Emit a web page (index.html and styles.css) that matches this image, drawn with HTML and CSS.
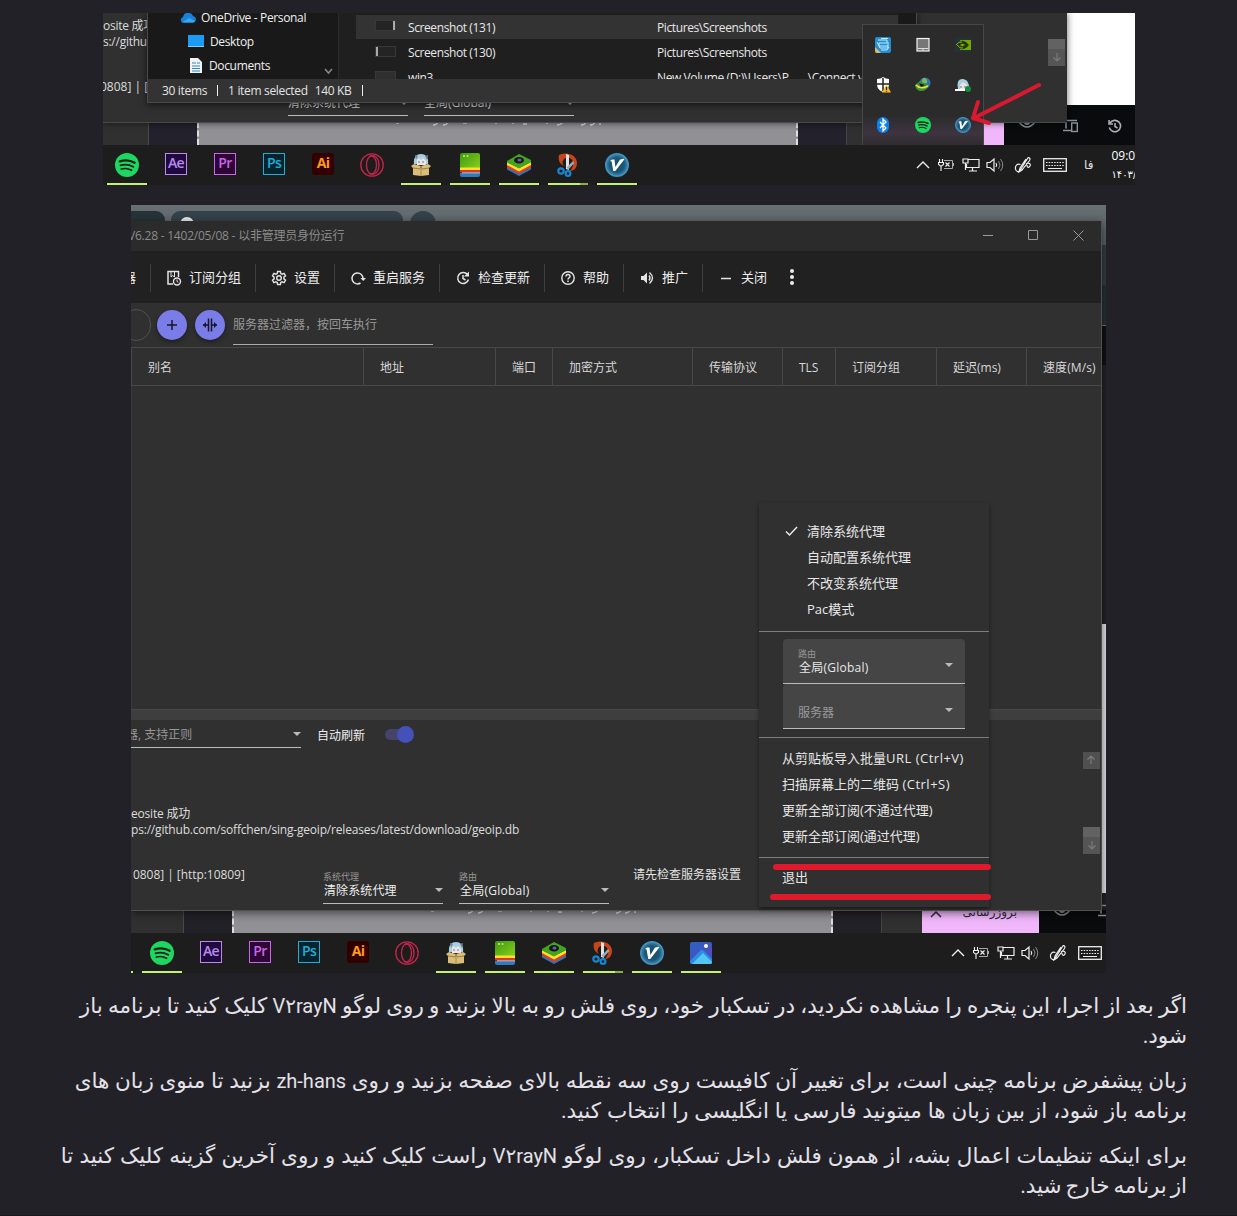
FILE: index.html
```html
<!DOCTYPE html>
<html lang="fa">
<head>
<meta charset="utf-8">
<title>V2rayN</title>
<link rel="stylesheet" href="styles.css">
</head>
<body>
<svg class="sprite" aria-hidden="true">
  <defs>
    <linearGradient id="gGreen" x1="0" y1="0" x2="1" y2="1"><stop offset="0" stop-color="#3c9a10"/><stop offset="1" stop-color="#8ad01c"/></linearGradient>
    <linearGradient id="gPhoto" x1="0" y1="0" x2="1" y2="1"><stop offset="0" stop-color="#2a62c4"/><stop offset="1" stop-color="#5b48b8"/></linearGradient>
    <radialGradient id="gV"><stop offset="0" stop-color="#174c68"/><stop offset=".65" stop-color="#1d5878"/><stop offset="1" stop-color="#3f8fbd"/></radialGradient>
  </defs>
  <symbol id="spotify" viewBox="0 0 24 24"><circle cx="12" cy="12" r="12" fill="#1ed760"/><g fill="none" stroke="#16201a" stroke-linecap="round"><path d="M4.800 8.300c5-1.500 10.700-1 14.800 1.400" stroke-width="2.300"/><path d="M5.500 12.300c4.300-1.200 9-.7 12.600 1.400" stroke-width="1.900"/><path d="M6.200 16c3.600-.9 7.400-.5 10.400 1.300" stroke-width="1.600"/></g></symbol>
  <symbol id="opera" viewBox="0 0 24 24"><g fill="none" stroke="#c4254c" stroke-width="1.300"><circle cx="12" cy="12" r="11.200"/><ellipse cx="11.500" cy="12" rx="5" ry="9"/><path d="M9 3.500c7-3 10 3 10 8.500s-3 11.500-10 8.500"/></g></symbol>
  <symbol id="box" viewBox="0 0 24 24"><path d="M5 11C4 4 8 1 12 1s8 3 7 10z" fill="#a9d0e2"/><path d="M6 2l3 1-2 4zM19 2l-3 1 2 4z" fill="#6e8ba0"/><path d="M8 7l2-2 2 2 2-2 3 3v4H8z" fill="#f0e3e2"/><path d="M10 8v2M14 8v2" stroke="#4688b4"/><path d="M2 13l3-2 7 2 7-2 3 2-2 2v7l-8 1-8-1v-7z" fill="#d9bd78"/><path d="M4 15l7 1 1-3 1 3 7-1" fill="none" stroke="#8e7136" stroke-width=".8"/><path d="M12 16v7" stroke="#a88a4b"/></symbol>
  <symbol id="bstacks" viewBox="0 0 24 24"><rect x="2" width="20" height="16" rx="2" fill="url(#gGreen)"/><path d="M2 14.500h20v2.500H2z" fill="#ffe12e"/><path d="M2 17h20v2.500H2z" fill="#e0352b"/><path d="M2 20h20v2q0 2-2 2H4q-2 0-2-2z" fill="#2c7cc0"/><path d="M5 3h2M8.500 3h2" stroke="#c8f08a" stroke-width="1.600"/><path d="M4 19.800h18" stroke="#fff" stroke-width=".7"/></symbol>
  <symbol id="layers" viewBox="0 0 24 24"><path d="M0 13l12 6 12-6v3.500l-12 6.500-12-6.500z" fill="#2378c3"/><path d="M0 11l12 6 12-6v3.500l-12 6.500-12-6.500z" fill="#e53a24"/><path d="M0 9l12 6 12-6v3l-12 6.500-12-6.500z" fill="#ffe12e"/><path d="M0 8l12-7 12 6v2l-12 6.500-12-6z" fill="#43a51d"/><ellipse cx="12" cy="7.300" rx="5" ry="3.200" fill="#17161c"/><ellipse cx="12.500" cy="7" rx="2" ry="1.500" fill="#735aab"/></symbol>
  <symbol id="snip" viewBox="0 0 24 24"><path d="M3 2c8-4 18 0 18 8 0 5-3 8-7 8 2-3 4-5 3-9-1-5-7-5-9-3-2 3-2 5 0 7C3 11 2 6 3 2z" fill="#c8451b"/><path d="M10 1l3 1v15l-3-1z" fill="#e2e3e5"/><path d="M17 8l1.500 2-6 6.500-2-2z" fill="#9ea7ae"/><g fill="none" stroke="#1686d1" stroke-width="2.200"><circle cx="5" cy="18" r="2.700"/><circle cx="12" cy="20.500" r="2.400"/></g></symbol>
  <symbol id="vlogo" viewBox="0 0 24 24"><circle cx="12" cy="12" r="11.300" fill="url(#gV)" stroke="#4492be" stroke-width="1.400"/><path d="M5 8l2-1.500h2.500l.9 7.600L15 6.500l4.500-.8-1 1.800L10.300 18H8.200L6.600 8.500z" fill="#fff"/></symbol>
  <symbol id="photos" viewBox="0 0 24 24"><rect x="1" y="1" width="22" height="22" rx="2" fill="url(#gPhoto)"/><path d="M1 20L12 9q1-1 2 0l9 9v3q0 2-2 2H3q-2 0-2-2z" fill="#2a8ce6"/><path d="M3 23L14 12l9 9q0 2-2 2z" fill="#52c6f5"/><circle cx="17" cy="5" r="2" fill="#fff"/></symbol>

  <symbol id="chev" viewBox="0 0 14 14"><path d="M1 10l6-6 6 6" fill="none" stroke="#eee" stroke-width="1.400"/></symbol>
  <symbol id="batt" viewBox="0 0 16 14"><path d="M6 2.500h8.500v8H6M15.500 5v3" fill="none" stroke="#aaa"/><path d="M1.500 1v3M4.500 1v3M.5 4.500h5v2l-2 1.500H2.500L.5 6.500zM3 8v5M7.500 4.500l4 4M11.500 4.500l-4 4" fill="none" stroke="#eee" stroke-width="1.100"/></symbol>
  <symbol id="net" viewBox="0 0 18 14"><path d="M6 1.500h11v8H4.500V6M10.500 9.500v3M7 13h8" fill="none" stroke="#eee" stroke-width="1.200"/><path d="M1 1h5v4H1zM3.500 5v7" fill="none" stroke="#eee" stroke-width="1.200"/></symbol>
  <symbol id="vol" viewBox="0 0 18 16"><path d="M1 5.500h3L8 2v12l-4-3.500H1z" fill="none" stroke="#eee" stroke-width="1.200"/><path d="M10 6q1.500 2 0 4" fill="none" stroke="#eee" stroke-width="1.200"/><path d="M12.500 4q3 4 0 8M14.500 2q4.500 6 0 12" fill="none" stroke="#888"/></symbol>
  <symbol id="pen" viewBox="0 0 18 18"><path d="M6.500 8.500C3 7 1 10 1.500 13s4 4 5.500 0L13.500 2.500q1-1.500 2-.5t0 2.500L8 14l-3 2 1-4 6-9M12 8c3-2 5 0 4 2s-3 2-3-1" fill="none" stroke="#eee" stroke-width="1.200"/></symbol>
  <symbol id="kbd" viewBox="0 0 24 14"><rect x=".7" y=".7" width="22.600" height="12.600" fill="none" stroke="#eee" stroke-width="1.300"/><path d="M3 4.500h18M3 7.500h18" stroke="#eee" stroke-width="1.200" stroke-dasharray="1.500 1.200"/><path d="M5 10.500h14" stroke="#eee"/></symbol>
  <symbol id="arrowdn" viewBox="0 0 10 10"><path d="M5 1v8M1.500 5.500L5 9l3.500-3.500" fill="none" stroke="#7b7b7b" stroke-width="1.200"/></symbol>
  <symbol id="eye" viewBox="0 0 18 12"><path d="M1 6q8-10 16 0-8 10-16 0z" fill="none" stroke="#8b9398" stroke-width="1.500"/><circle cx="9" cy="6" r="3" fill="#8b9398"/></symbol>
  <symbol id="devices" viewBox="0 0 16 14"><path d="M14 1.500H3v8M0 11.500h8" fill="none" stroke="#8b9398" stroke-width="1.500"/><rect x="8.700" y="4" width="5.600" height="8.500" fill="none" stroke="#8b9398" stroke-width="1.400"/></symbol>
  <symbol id="tails" viewBox="0 0 220 5"><path d="M1 1h3M38 3q4 0 5-3M48 3q4 0 5-3M68 1h4M100 1h2M117 1h2M128 2h4M151 1h2M162 3q4 0 6-3M186 3q4 0 5-3M195 3q4 0 5-3M204 2h2" fill="none" stroke="#e4e4e8" stroke-width="1.300"/></symbol>
</svg>

<main class="article">
  <figure class="shot shot-tray">
    <div class="page-behind">
      <div class="strip-panel"></div><div class="strip-upload"><svg width="220" height="5"><use href="#tails"/></svg></div><div class="strip-side"></div><div class="strip-pink"></div>
      <div class="strip-black"><svg width="18" height="12"><use href="#eye"/></svg><svg width="16" height="14"><use href="#devices"/></svg>
        <svg width="14" height="14" viewBox="0 0 14 14"><path d="M2 4a5.700 5.700 0 1 1-.7 4.500M1 1v4h4M7 4v3.500l2.500 1.500" fill="none" stroke="#a9afb2" stroke-width="1.600"/></svg></div>
    </div>
    <div class="app-back">
      <p class="log">osite 成功<br>s://github.com</p>
      <p class="ports">0808] | [http</p>
      <div class="back-fields"><span class="f1">清除系统代理<i class="caret"></i></span><span class="f2">全局(Global)<i class="caret"></i></span></div>
      <div class="scrollbit"><svg width="10" height="10"><use href="#arrowdn"/></svg></div>
    </div>
    <div class="explorer">
      <div class="ex-body">
        <div class="nav">
          <div class="nav-row top"><svg width="16" height="11" viewBox="0 0 16 11"><path d="M2 10.500Q-1 7 3 5q1-5 6-4 3 0 4 3 3 1 3 3 0 3-3 3.500z" fill="#1782dc"/><path d="M2 10.500L9 6l6 3q-1 2-3 1.500z" fill="#38a8f0"/></svg>OneDrive - Personal</div>
          <div class="nav-row"><svg width="16" height="13" viewBox="0 0 16 13"><path d="M0 0h16v12H0z" fill="#1b9cf2"/><path d="M0 11h16v1H0z" fill="#7fd0ff"/></svg>Desktop</div>
          <div class="nav-row docs"><svg width="12" height="15" viewBox="0 0 12 15"><path d="M0 0h8l4 4v11H0z" fill="#eef4f8"/><path d="M2 5h4M2 8h8M2 10.500h8M2 13h8M7 5h3" stroke="#3587b4" stroke-width="1.200"/></svg>Documents</div>
          <svg class="nav-chev" width="9" height="7" viewBox="0 0 9 7"><path d="M1 1l3.500 4L8 1" fill="none" stroke="#8a8a8a" stroke-width="1.500"/></svg>
        </div>
        <div class="files">
          <div class="file sel"><i class="thumb lit"></i><span>Screenshot (131)</span><span>Pictures\Screenshots</span></div>
          <div class="file"><i class="thumb left"></i><span>Screenshot (130)</span><span>Pictures\Screenshots</span></div>
          <div class="file"><i class="thumb plain"></i><span>win3</span><span>New Volume (D:)\Users\P... ...\Connect v</span></div>
        </div>
      </div>
      <div class="status"><span>30 items</span><i></i><span class="wide">1 item selected</span><span>140 KB</span><i></i></div>
    </div>
    <div class="tray-pop">
      <svg viewBox="0 0 16 16"><rect width="16" height="16" rx="2" fill="#238ed0"/><path d="M0 10l6 6H2q-2 0-2-2z" fill="#d8b878"/><path d="M3 3h9v3H4v3h9M2 5l3 6h8V5M6 13l6 0 2-3M6 1.500h7" fill="none" stroke="#c4ecff" stroke-width="1"/></svg>
      <svg viewBox="0 0 16 16"><rect x="2" y="1.500" width="12" height="12.500" fill="#777" stroke="#eef4f8" stroke-width="1.200"/><path d="M3 11.500h10M8 11.500V14" stroke="#ddd"/></svg>
      <svg viewBox="0 0 16 16"><path d="M0 1h16v14H0z" fill="#20323a"/><path d="M5 3h11v10H5z" fill="#76a900"/><path d="M1 8q6-7 12 0-6 7-12 0zM4 8q4-4 7 0-4 4-7 0z" fill="none" stroke="#243510" stroke-width="1.300"/><path d="M1 8q3-4 6-3M2 8q3 4 6 3" fill="none" stroke="#83b815"/></svg>
      <svg viewBox="0 0 16 16"><path d="M8 0q3 2 6 2v5q0 6-6 8-6-2-6-8V2q4 0 6-2z" fill="#fff"/><path d="M8 1v13M2 7h12" stroke="#222" stroke-width="1.500"/><path d="M11.500 7.500L16 15.500H7z" fill="#fdbd21"/><path d="M11.500 10v3M11.500 13.800v1" stroke="#222" stroke-width="1.200"/></svg>
      <svg viewBox="0 0 16 16"><circle cx="10" cy="6" r="5.500" fill="#2c73b9"/><path d="M8 1q5 0 4 5-5 1-5-2z" fill="#80bb49"/><path d="M0 8l5-4 4 3 5 1q-2 6-8 6-5 0-6-6z" fill="#3c9438"/><path d="M1 8q4 5 12 1" fill="none" stroke="#efdc49" stroke-width="1.500"/><path d="M4 6l6 2-4 2z" fill="#141a14"/></svg>
      <svg viewBox="0 0 16 16"><path d="M3 12Q1 1 8 2t6 11z" fill="#a8cfdf"/><path d="M5 8l3-3 4 3v5H5z" fill="#efe1e3"/><path d="M6 9v2M10 9v2" stroke="#567b98"/><path d="M0 13h10" stroke="#fff" stroke-width="2"/><circle cx="13" cy="12" r="3" fill="#128c39"/></svg>
      <svg viewBox="0 0 16 16"><rect x="2" width="12" height="16" rx="6" fill="#0a82ea"/><path d="M5 5l6 6-3 3V2l3 3-6 6" fill="none" stroke="#fff" stroke-width="1.300"/></svg>
      <svg><use href="#spotify"/></svg>
      <svg><use href="#vlogo"/></svg>
    </div>
    <svg class="arrow" width="76" height="48" viewBox="0 0 76 48"><path d="M71 5L6 38M10 22L5 38l16 5" fill="none" stroke="#d8192f" stroke-width="4" stroke-linecap="round" stroke-linejoin="round"/></svg>
    <div class="taskbar">
      <div class="apps">
        <span class="app on"><svg><use href="#spotify"/></svg></span>
        <span class="app"><b class="adobe ae">Ae</b></span>
        <span class="app"><b class="adobe pr">Pr</b></span>
        <span class="app"><b class="adobe ps">Ps</b></span>
        <span class="app"><b class="adobe ai">Ai</b></span>
        <span class="app"><svg><use href="#opera"/></svg></span>
        <span class="app on"><svg><use href="#box"/></svg></span>
        <span class="app on"><svg><use href="#bstacks"/></svg></span>
        <span class="app on"><svg><use href="#layers"/></svg></span>
        <span class="app on multi"><svg><use href="#snip"/></svg></span>
        <span class="app on"><svg><use href="#vlogo"/></svg></span>
      </div>
      <div class="tray">
        <svg width="14" height="14"><use href="#chev"/></svg><svg width="16" height="14"><use href="#batt"/></svg><svg width="18" height="14"><use href="#net"/></svg><svg width="18" height="16"><use href="#vol"/></svg><svg class="penicon" width="18" height="18"><use href="#pen"/></svg><svg width="24" height="14"><use href="#kbd"/></svg>
        <span class="lang">فا</span><span class="clock">09:09<br><bdo dir="ltr">۱۴۰۳/</bdo></span>
      </div>
    </div>
  </figure>

  <figure class="shot shot-menu">
    <div class="browser-behind">
      <div class="tabs"><i class="tab t1"></i><i class="tab t2"><b></b></i><i class="tab t3"></i></div>
      <div class="sliver"><i class="s1"></i><i class="s2"></i><i class="s3"></i><i class="s4"></i><i class="s5"></i></div>
      <div class="bottom-strip"><div class="strip-panel"></div><div class="strip-upload"><svg width="220" height="5"><use href="#tails"/></svg></div><div class="strip-side"></div><div class="strip-mid"></div>
        <div class="strip-pink"><svg width="12" height="12"><path d="M1 7l5-5 5 5" fill="none" stroke="#33263a" stroke-width="1.500"/></svg><span>بروزرسانی</span></div>
        <div class="strip-black"><svg width="18" height="12"><use href="#eye"/></svg><svg width="16" height="14"><use href="#devices"/></svg></div></div>
    </div>
    <div class="window">
      <div class="titlebar"><span>V6.28 - 1402/05/08 - 以非管理员身份运行</span>
        <div class="winbtns"><svg width="10" height="11"><path d="M0 5.500h10" stroke="#999"/></svg><svg width="10" height="11"><path d="M.5.500h9v9h-9z" fill="none" stroke="#999"/></svg><svg width="11" height="11"><path d="M.5.500l10 10M10.500.500l-10 10" stroke="#999"/></svg></div></div>
      <div class="toolbar">
        <div class="tool first">器</div>
        <div class="tool"><svg viewBox="0 0 16 16"><path d="M7 14H2V1.500h10.500V7" stroke-width="1.500"/><path d="M5 2v5l1.700-1.400L8.500 7V2"/><circle cx="11" cy="11.500" r="3.500" stroke-width="1.400"/><path d="M11 9.500v2l1.300.8"/></svg>订阅分组</div>
        <div class="tool"><svg viewBox="0 0 16 16"><path d="M6.600 1.500h2.800l.4 2 1.300.7 2-.8 1.400 2.500-1.600 1.300v1.600l1.600 1.300-1.400 2.500-2-.8-1.300.7-.4 2H6.600l-.4-2-1.300-.7-2 .8-1.400-2.500 1.600-1.300V7.200L1.500 5.900l1.400-2.500 2 .8 1.300-.7z" stroke-width="1.400"/><circle cx="8" cy="8" r="2.300" stroke-width="1.400"/></svg>设置</div>
        <div class="tool"><svg viewBox="0 0 16 16"><path d="M10.500 13A5.500 5.500 0 1 1 13 8.500" stroke-width="1.500"/><path d="M10.500 8l2.700 3L16 8z" class="solid"/></svg>重启服务</div>
        <div class="tool"><svg viewBox="0 0 16 16"><path d="M12.500 4.500A5.500 5.500 0 1 0 13.500 9.500M8 5v3.500l2.500 1.500" stroke-width="1.500"/><path d="M14 1.500v5H9z" class="solid"/></svg>检查更新</div>
        <div class="tool"><svg viewBox="0 0 16 16"><circle cx="8" cy="8" r="6.200" stroke-width="1.400"/><path d="M6 6.500q0-2 2-2t2 2c0 1.200-2 1.300-2 3M8 10.500v1.600" stroke-width="1.400"/></svg>帮助</div>
        <div class="tool"><svg viewBox="0 0 16 16"><path d="M2 6h2.500L8 2.500v11L4.500 10H2z" class="solid"/><path d="M10 5.500q2 2.500 0 5M10.500 2.500q6 5.500 0 11" stroke-width="1.400"/></svg>推广</div>
        <div class="tool"><svg viewBox="0 0 16 16"><path d="M3 8.500h10" stroke-width="1.500"/></svg>关闭</div>
        <div class="dots"><i></i><i></i><i></i></div>
      </div>
      <div class="filter"><i class="pill"></i>
        <span class="round"><svg width="16" height="16"><path d="M8 3v10M3 8h10" stroke="#17172b" stroke-width="1.500"/></svg></span>
        <span class="round"><svg width="16" height="16"><path d="M6.500 1.500v13M9.500 1.500v13M1 8h5M10 8h5" stroke="#17172b" stroke-width="1.500"/><path d="M4 5L1 8l3 3zM12 5l3 3-3 3z" fill="#17172b"/></svg></span>
        <div class="search">服务器过滤器，按回车执行</div></div>
      <div class="thead"><span>别名</span><span>地址</span><span>端口</span><span>加密方式</span><span>传输协议</span><span>TLS</span><span>订阅分组</span><span>延迟(ms)</span><span>速度(M/s)</span></div>
      <div class="tbody"></div>
      <div class="splitter"></div>
      <div class="lower">
        <div class="logbar"><div class="logfilter"><span>器, 支持正则</span><i class="caret"></i></div><span class="auto">自动刷新</span><span class="switch"></span></div>
        <div class="logtext">eosite 成功<br>ps://github.com/soffchen/sing-geoip/releases/latest/download/geoip.db</div>
        <div class="footer"><span class="portline">0808] | [http:10809]</span>
          <div class="field fa"><small>系统代理</small><span>清除系统代理</span><i class="caret"></i></div>
          <div class="field fb"><small>路由</small><span>全局(Global)</span><i class="caret"></i></div>
          <span class="hint">请先检查服务器设置</span></div>
      </div>
      <div class="scrollup"><svg width="10" height="10"><use href="#arrowdn"/></svg></div>
      <div class="scrollbit"><svg width="10" height="10"><use href="#arrowdn"/></svg></div>
    </div>
    <div class="menu">
      <div class="group g1"><div class="mi checked"><svg width="13" height="10" viewBox="0 0 13 10"><path d="M1 5.500l3.500 3.500L12 1" fill="none" stroke="#eee" stroke-width="1.400"/></svg>清除系统代理</div><div class="mi">自动配置系统代理</div><div class="mi">不改变系统代理</div><div class="mi">Pac模式</div></div>
      <div class="group g2"><div class="combo"><small>路由</small><span>全局(Global)</span><i class="caret"></i></div><div class="combo empty"><span>服务器</span><i class="caret"></i></div></div>
      <div class="group g3"><div class="mi">从剪贴板导入批量<span class="lat">URL (Ctrl+V)</span></div><div class="mi">扫描屏幕上的二维码 <span class="lat">(Ctrl+S)</span></div><div class="mi">更新全部订阅(不通过代理)</div><div class="mi">更新全部订阅(通过代理)</div></div>
      <div class="group g4"><div class="mi">退出</div></div>
    </div>
    <i class="mark m1"></i><i class="mark m2"></i>
    <div class="taskbar">
      <div class="apps">
        <span class="app on"><svg><use href="#spotify"/></svg></span>
        <span class="app"><b class="adobe ae">Ae</b></span>
        <span class="app"><b class="adobe pr">Pr</b></span>
        <span class="app"><b class="adobe ps">Ps</b></span>
        <span class="app"><b class="adobe ai">Ai</b></span>
        <span class="app"><svg><use href="#opera"/></svg></span>
        <span class="app on"><svg><use href="#box"/></svg></span>
        <span class="app on"><svg><use href="#bstacks"/></svg></span>
        <span class="app on"><svg><use href="#layers"/></svg></span>
        <span class="app on multi"><svg><use href="#snip"/></svg></span>
        <span class="app on"><svg><use href="#vlogo"/></svg></span>
        <span class="app on"><svg><use href="#photos"/></svg></span>
      </div>
      <div class="tray">
        <svg width="14" height="14"><use href="#chev"/></svg><svg width="16" height="14"><use href="#batt"/></svg><svg width="18" height="14"><use href="#net"/></svg><svg width="18" height="16"><use href="#vol"/></svg><svg class="penicon" width="18" height="18"><use href="#pen"/></svg><svg width="24" height="14"><use href="#kbd"/></svg>
      </div>
    </div>
  </figure>

  <div class="prose" dir="rtl">
    <p><span class="ln w1">اگر بعد از اجرا، این پنجره را مشاهده نکردید، در تسکبار خود، روی فلش رو به بالا بزنید و روی لوگو <bdo dir="ltr">V۲rayN</bdo> کلیک کنید تا برنامه باز</span><span class="ln">شود.</span></p>
    <p><span class="ln w3">زبان پیشفرض برنامه چینی است، برای تغییر آن کافیست روی سه نقطه بالای صفحه بزنید و روی <bdo dir="ltr">zh-hans</bdo> بزنید تا منوی زبان های</span><span class="ln w4">برنامه باز شود، از بین زبان ها میتونید فارسی یا انگلیسی را انتخاب کنید.</span></p>
    <p><span class="ln w5">برای اینکه تنظیمات اعمال بشه، از همون فلش داخل تسکبار، روی لوگو <bdo dir="ltr">V۲rayN</bdo> راست کلیک کنید و روی آخرین گزینه کلیک کنید تا</span><span class="ln w6">از برنامه خارج شید.</span></p>
  </div>
</main>
</body>
</html>
```

FILE: styles.css
```css
* { box-sizing: border-box; }
body { margin: 0; background: #222127; color: #e4e1e8; font-family: "Open Sans", "Noto Sans CJK SC", sans-serif; overflow: hidden; }
p, figure { margin: 0; }
i, b { font-style: normal; }
.sprite { position: absolute; width: 0; height: 0; }
.article { display: flex; flex-direction: column; height: 1216px; padding-top: 13px; border-bottom: 1px solid #19181d; }
.shot { position: relative; overflow: hidden; flex: none; font-size: 12px; }
.caret { display: inline-block; border: 4px solid transparent; border-top-color: #bbb; border-bottom: 0; }

/* desktop with the hidden-icons popup */
.shot-tray { width: 1032px; height: 172px; margin-left: 103px; background: #1d1d1d; }
.page-behind { position: absolute; inset: 0 0 40px; background: linear-gradient(90deg, #23212b 0 964px, #fff 964px); }
.strip-panel { position: absolute; left: 0; bottom: 0; width: 46px; height: 23px; background: #303030; border-right: 1px solid #4a4a4a; }
.strip-upload { position: absolute; left: 94px; bottom: 0; width: 601px; height: 23px; background: #919095; border: 2px dashed #dedee2; border-width: 0 2px; }
.strip-upload svg { position: absolute; left: 196px; top: 0; }
.strip-side { position: absolute; left: 743px; bottom: 0; width: 60px; height: 23px; background: #303030; border-left: 1px solid #444; }
.strip-pink { position: absolute; left: 880px; bottom: 0; width: 21px; height: 23px; background: #f0b8fb; }
.strip-black { position: absolute; left: 901px; bottom: 0; width: 131px; height: 40px; background: #090b0c; }
.strip-black svg { position: absolute; left: 14px; top: 11px; }
.strip-black svg:nth-child(2) { left: 59px; top: 14px; }
.strip-black svg:nth-child(3) { left: 104px; top: 14px; }
.app-back { position: absolute; left: 0; top: 0; width: 964px; height: 110px; background: #303030; color: #ddd; overflow: hidden; border-bottom: 1px solid #484848; box-shadow: 0 0 7px #0009; }
.log { padding-top: 5px; line-height: 16px; white-space: nowrap; letter-spacing: -.25px; }
.ports { margin-left: -3px; padding-top: 28px; line-height: 18px; white-space: nowrap; }
.back-fields { display: flex; gap: 16px; position: absolute; left: 185px; top: 80px; }
.back-fields span { display: flex; justify-content: space-between; align-items: center; height: 23px; padding-bottom: 3px; line-height: 18px; border-bottom: 1px solid #bbb; }
.f1 { width: 120px; } .f2 { width: 150px; }
.scrollbit { position: absolute; width: 17px; height: 27px; background: linear-gradient(#626262 0 10px, #555 10px); display: flex; justify-content: center; align-items: flex-end; padding-bottom: 4px; }
.app-back .scrollbit { left: 945px; top: 26px; }
.explorer { position: absolute; left: 44px; top: 0; width: 770px; height: 90px; display: flex; flex-direction: column; background: #1f1f1f; color: #f0f0f0; border: 1px solid #4a4a4a; border-top: 0; box-shadow: 0 2px 7px #0009; }
.ex-body { display: flex; flex: 1; min-height: 0; overflow: hidden; }
.nav { width: 191px; background: #191919; border-right: 1px solid #2c2c2c; position: relative; }
.nav-row { display: flex; align-items: center; gap: 6px; height: 24px; padding-left: 40px; white-space: nowrap; letter-spacing: -.35px; }
.nav-row.top { height: 16px; padding: 0 0 7px 32px; gap: 5px; }
.nav-row.docs { padding-left: 42px; gap: 7px; }
.nav-chev { position: absolute; right: 5px; bottom: 4px; }
.files { flex: 1; padding: 2px 1px 0 17px; border-right: 17px solid #191919; }
.file { display: grid; grid-template-columns: 52px 249px 1fr; align-items: center; height: 25px; white-space: nowrap; color: #e8e8e8; }
.file span { letter-spacing: -.4px; }
.file.sel { background: #333; height: 24px; margin-bottom: 1px; }
.thumb { width: 21px; height: 11px; margin: -3px 0 0 19px; background: #242424; border: 1px solid #383838; }
.thumb.lit { box-shadow: inset -2px 0 #aaa; } .thumb.left { box-shadow: inset 2px 0 #aaa; }
.thumb.plain { background: #2f2f2f; }
.status { position: relative; display: flex; align-items: center; height: 23px; padding-left: 14px; background: #333; color: #e4e4e4; letter-spacing: -.33px; white-space: nowrap; }
.status i { width: 1px; height: 11px; background: #eee; margin: 0 10px; }
.status .wide { margin-right: 7px; }
.tray-pop { position: absolute; left: 759px; top: 11px; width: 122px; height: 121px; display: grid; grid-template-columns: repeat(3, 40px); grid-auto-rows: 40px; place-items: center; background: linear-gradient(#2b2b2b 75%, #3d343f 90%, #2f2b30); border: 1px solid #474747; border-bottom: 0; }
.tray-pop svg { width: 16px; height: 16px; }
.arrow { position: absolute; left: 865px; top: 67px; }

.taskbar { position: absolute; left: 0; right: 0; bottom: 0; height: 40px; background: #1d1d1d; }
.apps { display: flex; gap: 9px; padding-left: 4px; }
.app { width: 40px; height: 40px; display: flex; justify-content: center; align-items: center; }
.app svg { width: 24px; height: 24px; }
.app.on { border-bottom: 2px solid #c2f36a; padding-top: 2px; }
.app.multi { border-image: linear-gradient(90deg, #c2f36a 78%, #8bb04a 78%) 2; border-width: 0 0 2px; border-style: solid; }
.adobe { width: 22px; height: 22px; margin-bottom: 3px; border: 1.5px solid; font: 600 14px/18px "Open Sans", sans-serif; text-align: center; letter-spacing: -.6px; }
.ae { color: #b98bf0; background: #20093f; } .pr { color: #cb64e8; background: #2d0735; }
.ps { color: #20afd4; background: #062430; } .ai { color: #ff9a1c; background: #330000; border-color: #330000; border-radius: 3px; font-weight: 700; }
.tray { position: absolute; left: 813px; top: 0; height: 40px; width: 240px; display: flex; align-items: center; gap: 8px; }
.tray svg:nth-child(4) { margin-left: -2px; }
.tray .penicon { margin-left: 2px; margin-right: 3px; }
.tray .lang { margin-left: 9px; font: 12px "DejaVu Sans", sans-serif; }
.clock { margin-left: 10px; font-size: 12px; line-height: 18px; font-family: "Open Sans", sans-serif; letter-spacing: -.9px; white-space: nowrap; color: #fff; }
.clock bdo { font: 10px/18px "DejaVu Sans", sans-serif; }

/* program window with the tray context menu */
.shot-menu { width: 975px; height: 768px; margin: 20px 0 0 131px; background: #1d1d1d; }
.browser-behind { position: absolute; inset: 0 0 40px; background: #222127; }
.tabs { height: 40px; background: linear-gradient(#687074, #585f62); position: relative; }
.tab { position: absolute; top: 6px; height: 30px; background: #34434a; border-radius: 9px 9px 0 0; }
.t1 { left: -10px; width: 44px; background: #263438; } .t2 { left: 40px; width: 232px; } .t3 { left: 279px; width: 26px; border-radius: 13px; }
.tab b { position: absolute; left: 9px; top: 6px; width: 14px; height: 14px; border-radius: 50%; background: #edf0f1; }
.sliver { position: absolute; right: 0; top: 40px; bottom: 40px; width: 4px; display: flex; flex-direction: column; }
.s1 { height: 40px; background: #303e45; } .s2 { height: 41px; background: #233038; border-bottom: 1px solid #777; }
.s3 { height: 39px; background: #111; } .s4 { height: 259px; background: #222127; } .s5 { flex: 1; background: #e4e4e7; }
.bottom-strip { position: absolute; left: 0; right: 0; bottom: 0; height: 23px; }
.shot-menu .strip-panel { width: 53px; }
.shot-menu .strip-upload { left: 101px; }
.shot-menu .strip-pink { left: 791px; width: 117px; display: flex; padding: 0 22px 0 8px; justify-content: space-between; color: #33263a; font: 12px/4px "DejaVu Sans", sans-serif; }
.shot-menu .strip-black { left: 908px; width: 67px; height: 23px; }
.shot-menu .strip-black svg { top: -6px; }
.shot-menu .strip-black svg:nth-child(2) { left: 59px; top: -6px; }
.shot-menu .strip-side { display: none; }
.strip-mid { position: absolute; left: 750px; width: 41px; height: 23px; background: #303030; border-left: 1px solid #444; }
.window { position: absolute; left: 0; top: 16px; width: 971px; height: 690px; background: #303030; border: solid #505050; border-width: 0 1px 1px 0; display: flex; flex-direction: column; box-shadow: 0 2px 9px #0008; }
.titlebar { height: 30px; flex: none; background: #2b2b2b; color: #8c8c8c; line-height: 30px; display: flex; justify-content: space-between; overflow: hidden; letter-spacing: -.22px; }
.titlebar span { margin-left: -3px; }
.winbtns { display: flex; gap: 35px; align-items: center; padding: 0 17px 2px 0; }
.toolbar { height: 52px; flex: none; background: #212121; display: flex; align-items: center; font-size: 13px; color: #eee; }
.tool { display: flex; align-items: center; gap: 7px; height: 28px; padding: 0 14px 2px 15px; margin-top: 1px; border-right: 1px solid #3e3e3e; white-space: nowrap; }
.tool.first { width: 20px; padding: 0 14px 2px 0; direction: rtl; overflow: hidden; }
.tool:nth-child(8) { border: 0; }
.tool svg { width: 16px; height: 16px; fill: none; stroke: #e4e4e4; position: relative; top: 1px; }
.tool .solid { fill: #e4e4e4; stroke: none; }
.dots { display: flex; flex-direction: column; gap: 2px; margin-left: 9px; }
.dots i { width: 4px; height: 4px; border-radius: 50%; background: #eee; }
.filter { height: 44px; flex: none; display: flex; align-items: flex-start; overflow: hidden; }
.pill { width: 30px; height: 32px; margin: 6px 6px 0 -10px; border: 1px solid #505050; border-radius: 16px; }
.round { width: 30px; height: 30px; margin: 7px 8px 0 0; border-radius: 50%; background: #7a7ce8; display: grid; place-items: center; box-shadow: 0 2px 4px #0006; }
.search { width: 200px; height: 42px; border-bottom: 1px solid #aaa; line-height: 43px; color: #989898; white-space: nowrap; }
.thead { display: grid; grid-template-columns: 232px 132px 57px 140px 90px 53px 101px 90px 1fr; height: 39px; flex: none; border: solid #484848; border-width: 1px 0 1px 1px; color: #d8d8d8; line-height: 39px; white-space: nowrap; }
.thead span { border-right: 1px solid #484848; padding-left: 16px; height: 37px; }
.thead span:last-child { border: 0; letter-spacing: .1px; }
.tbody { height: 323px; flex: none; border-left: 1px solid #3a3a3a; }
.splitter { height: 11px; flex: none; background: #3e3e3e; border-top: 1px solid #484848; }
.lower { flex: 1; color: #ddd; display: flex; flex-direction: column; }
.logbar { display: flex; align-items: center; height: 28px; }
.logfilter { width: 170px; height: 28px; border-bottom: 1px solid #bbb; display: flex; justify-content: space-between; align-items: center; color: #969696; margin-right: 16px; }
.logfilter span { margin-left: -5px; }
.auto { color: #eee; width: 68px; margin-top: 2px; }
.switch { width: 28px; height: 11px; border-radius: 6px; background: #45436a; position: relative; }
.switch::after { content: ""; position: absolute; right: -1px; top: -3px; width: 17px; height: 17px; border-radius: 50%; background: #4351b8; }
.logtext { margin-top: 58px; line-height: 16px; height: 50px; white-space: nowrap; letter-spacing: -.19px; }
.footer { display: flex; height: 54px; align-items: flex-start; padding-left: 2px; }
.portline { width: 190px; line-height: 38px; white-space: nowrap; letter-spacing: -.05px; }
.field { position: relative; height: 48px; padding-top: 15px; margin-right: 16px; display: flex; flex-direction: column; border-bottom: 1px solid #bbb; }
.field small, .combo small { font-size: 9px; line-height: 11px; color: #969696; }
.field span { line-height: 18px; white-space: nowrap; color: #eee; padding-left: 1px; letter-spacing: .1px; }
.field .caret, .combo .caret { position: absolute; right: 0; bottom: 11px; }
.fa { width: 120px; } .fb { width: 150px; }
.fb span, .g2 .combo span { letter-spacing: .25px; }
.hint { margin-left: 8px; line-height: 38px; color: #e4e4e4; }
.scrollup { position: absolute; right: 1px; top: 531px; width: 17px; height: 17px; background: #505050; display: grid; place-items: center; transform: rotate(180deg); }
.window .scrollbit { right: 1px; top: 606px; }
.menu { position: absolute; left: 628px; top: 298px; width: 230px; height: 404px; background: #303030; color: #e8e8e8; font-size: 13px; box-shadow: 0 2px 4px #0007; white-space: nowrap; }
.group { border-bottom: 1px solid #7d7d7d; }
.mi { height: 26px; line-height: 26px; padding-left: 23px; }
.lat { letter-spacing: .5px; }
.g1 { height: 129px; padding-top: 15px; } .g1 .mi { padding-left: 48px; }
.g1 .checked { display: flex; align-items: center; padding-left: 26px; gap: 9px; }
.g2 { height: 106px; padding: 7px 24px 0; }
.combo { position: relative; height: 45px; padding: 9px 16px 0 15px; border-bottom: 1px solid #bbb; border-radius: 4px 4px 0 0; background: #454545; display: flex; flex-direction: column; font-size: 12px; }
.combo span { line-height: 18px; padding-left: 1px; }
.combo .caret { right: 12px; bottom: 16px; }
.combo.empty { padding-top: 20px; color: #999; } .combo.empty span { padding: 0; letter-spacing: 0; }
.g3 { height: 120px; padding-top: 7px; } .g4 { padding-top: 6px; border: 0; }
.mark { position: absolute; height: 6px; border-radius: 3px; background: #df1a2d; }
.m1 { left: 642px; top: 659px; width: 218px; } .m2 { left: 639px; top: 689px; width: 221px; }
.shot-menu .apps { padding-left: 11px; }
.shot-menu .tray { left: 820px; }
.shot-menu .taskbar::before { content: ""; position: absolute; left: 0; bottom: 0; width: 2px; height: 2px; background: #c2f36a; }

.prose { margin: 18px 50px 0 0; display: flex; flex-direction: column; gap: 15px; font: 21.5px/30px Roboto, "DejaVu Sans", sans-serif; }
.prose bdo { font-size: 20px; word-spacing: 0; }
.ln { display: block; height: 30px; white-space: nowrap; }
.w1 { word-spacing: -.1px; } .w3 { word-spacing: .3px; } .w4 { word-spacing: .6px; } .w5 { word-spacing: .8px; } .w6 { word-spacing: -1.5px; }
```
